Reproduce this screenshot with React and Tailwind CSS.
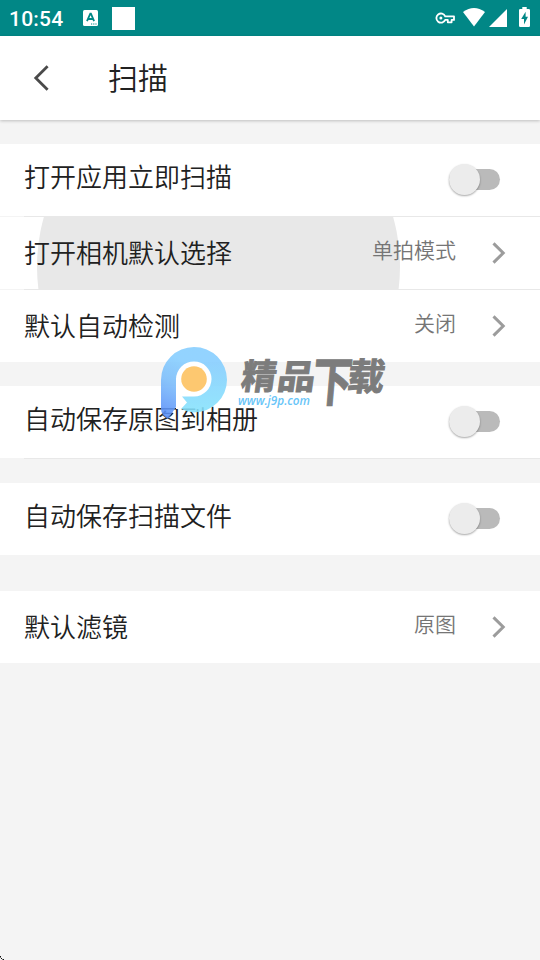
import React, { useState } from 'react';

const SECTIONS = [
  {
    id: 'open',
    className: 'mt-6',
    rows: [
      { id: 'scanOnOpen', label: '打开应用立即扫描', type: 'switch', divider: true },
      { id: 'cameraMode', label: '打开相机默认选择', type: 'link', value: '单拍模式', divider: true, pressed: true },
      { id: 'autoDetect', label: '默认自动检测', type: 'link', value: '关闭' },
    ],
  },
  {
    id: 'album',
    className: 'mt-6',
    rows: [{ id: 'saveOriginal', label: '自动保存原图到相册', type: 'switch', divider: true }],
  },
  {
    id: 'files',
    className: 'mt-6',
    rows: [{ id: 'saveScan', label: '自动保存扫描文件', type: 'switch' }],
  },
  {
    id: 'filter',
    className: 'mt-9',
    rows: [{ id: 'filter', label: '默认滤镜', type: 'link', value: '原图' }],
  },
];

const StatusBar = () => (
  <div className="flex h-9 items-center bg-[#018786] pl-[9px] pr-[10px] text-white">
    <span className="w-[74px] pt-px font-[Roboto] text-[21px] font-medium leading-9 tracking-[0.2px]">10:54</span>
    <svg className="h-4 w-[15px]" viewBox="0 0 15 16">
      <rect width="15" height="16" rx="1.5" fill="#fff" />
      <path d="M4 11.2 7.3 3.6h.6l3.2 7.6M5.2 9h4.6" fill="none" stroke="#018786" strokeWidth="1.8" />
      <path d="M8 14h1.2M10.2 14h1.2M12.4 14h1.2" stroke="#018786" strokeWidth="1.2" />
    </svg>
    <div className="ml-[14px] h-[23px] w-[23px] bg-white" />
    <svg className="ml-auto h-3 w-5" viewBox="0 0 20 12" fill="none" stroke="#fff" strokeWidth="1.8">
      <path d="M10.2 4.3A4.6 4.6 0 1 0 10.2 7.9H12.8V10.3H16.6V7.9H19V4.3Z" strokeLinejoin="round" />
      <circle cx="5.9" cy="6.1" r="1.5" fill="#fff" stroke="none" />
    </svg>
    <svg className="ml-[8px] h-[19px] w-[22px] -mt-px" viewBox="0 0 22 19">
      <path d="M0 4Q11-4 22 4L11 18.5Z" fill="#fff" />
    </svg>
    <svg className="ml-[4px] h-[18px] w-[18px]" viewBox="0 0 18 18">
      <path d="M18 0V18H0Z" fill="#fff" />
    </svg>
    <svg className="ml-[12px] h-5 w-[11px] -mt-0.5" viewBox="0 0 11 20">
      <path d="M3.3 0h4.4v2H9.7Q11 2 11 3.3V18.7Q11 20 9.7 20H1.3Q0 20 0 18.7V3.3Q0 2 1.3 2H3.3Z" fill="#fff" />
      <path d="M6.6 4.8 2.2 12H5V17.6L9 9.8H6.6Z" fill="#018786" />
    </svg>
  </div>
);

const Header = () => (
  <header className="flex h-[84px] items-center bg-white pl-[33px] shadow-[0_1px_3px_rgba(0,0,0,0.22)]">
    <button className="h-[26px] w-4">
      <svg className="h-[26px] w-4" viewBox="0 0 16 26" fill="none" stroke="#4a4a4a" strokeWidth="2.8">
        <path d="M14.6 1.3 2.8 13 14.6 24.7" />
      </svg>
    </button>
    <h1 className="ml-[59px] pb-[3px] text-[30px] font-[350] leading-[81px] text-[#212121]">扫描</h1>
  </header>
);

const Switch = ({ checked, onChange }) => (
  <button
    role="switch"
    aria-checked={checked}
    onClick={onChange}
    className="mb-0.5 mr-10 flex h-[31px] w-[51px] items-center"
  >
    <span className={`flex h-[21px] w-full items-center rounded-full bg-[#bababa] ${checked ? 'justify-end' : ''}`}>
      <span className="h-[31px] w-[31px] rounded-full bg-[#ececec] shadow-[0_1px_2px_rgba(0,0,0,0.35)]" />
    </span>
  </button>
);

const Chevron = () => (
  <svg className="ml-9 mr-[34px] h-[22px] w-[14px]" viewBox="0 0 14 22" fill="none" stroke="#9c9c9c" strokeWidth="3">
    <path d="M1.5 1.4 11.2 11 1.5 20.6" />
  </svg>
);

const Row = ({ row, checked, onToggle }) => (
  <>
    <div className="relative flex h-[72px] items-center overflow-hidden bg-white pl-6">
      {/* Touch ripple */}
      {row.pressed && (
        <div className="absolute left-[37px] top-[-132px] h-[363px] w-[363px] rounded-full bg-[#e8e8e8]" />
      )}
      <span
        className={`relative flex-1 text-[26px] font-[350] leading-[38px] text-[#212121] ${
          row.type === 'switch' ? 'pb-2' : 'pb-0.5'
        }`}
      >
        {row.label}
      </span>
      {row.type === 'switch' ? (
        <Switch checked={checked} onChange={onToggle} />
      ) : (
        <>
          <span className="relative pb-2 text-[21px] font-[350] leading-[30px] text-[#757575]">{row.value}</span>
          <Chevron />
        </>
      )}
    </div>
    {row.divider && <div className="ml-6 h-px bg-[#e8e8e8]" />}
  </>
);

const Watermark = () => (
  <svg
    className="pointer-events-none absolute left-[155px] top-[340px] h-[84px] w-[236px]"
    viewBox="155 340 236 84"
    fontFamily="'Noto Sans CJK SC', sans-serif"
  >
    <defs>
      <linearGradient id="logo" gradientUnits="userSpaceOnUse" x1="163" y1="412" x2="186" y2="362">
        <stop offset="0" stopColor="#5a90f8" />
        <stop offset="0.55" stopColor="#79bcfb" />
        <stop offset="1" stopColor="#84cdff" />
      </linearGradient>
      <linearGradient id="bowl" gradientUnits="userSpaceOnUse" x1="206" y1="408" x2="206" y2="362">
        <stop offset="0" stopColor="#84e0fc" />
        <stop offset="1" stopColor="#84cdff" />
      </linearGradient>
    </defs>
    <circle cx="194" cy="379" r="18" fill="#fff" />
    <path d="M176 379H194V396H182L187 403L181 409H176Z" fill="#fff" />
    <g fillOpacity="0.88">
      <path d="M161 380A33 33 0 0 1 194 347V361.5A18 18 0 0 0 176 379V407L168 419Q161 415 161 409Z" fill="url(#logo)" />
      <path
        d="M194 347A33 32.7 0 0 1 194 412.4Q187 412 181 409L187 402.5L182 396.5H194A17.5 17.5 0 0 0 194 361.5Z"
        fill="url(#bowl)"
      />
    </g>
    <circle cx="194" cy="379" r="12.8" fill="#fdc870" />
    <g fill="#7c7c7c" fontWeight="700" stroke="#7c7c7c" strokeWidth="1">
      <text transform="translate(240 389) skewX(-8)" fontSize="35">精</text>
      <text transform="translate(276 389) skewX(-8) scale(1.12 1)" fontSize="34">品</text>
      <text transform="translate(311 401) skewX(-5) scale(0.84 1.13)" fontSize="47">下</text>
      <text transform="translate(346 390) skewX(-8)" fontSize="37">载</text>
    </g>
    <text
      x="238"
      y="404.5"
      fontSize="12.5"
      fontWeight="600"
      fontStyle="italic"
      fontFamily="'Open Sans', sans-serif"
      textLength="72"
      lengthAdjust="spacingAndGlyphs"
      fill="#68c5f8"
    >
      www.j9p.com
    </text>
  </svg>
);

const App = () => {
  const [settings, setSettings] = useState({});

  const toggle = (id) => {
    setSettings((prev) => ({ ...prev, [id]: !prev[id] }));
  };

  return (
    <div className="relative h-[960px] w-[540px] overflow-hidden bg-[#f4f4f4] font-['Noto_Sans_CJK_SC',sans-serif]">
      <StatusBar />
      <Header />

      {SECTIONS.map((section) => (
        <section key={section.id} className={section.className}>
          {section.rows.map((row) => (
            <Row key={row.id} row={row} checked={!!settings[row.id]} onToggle={() => toggle(row.id)} />
          ))}
        </section>
      ))}

      <Watermark />

      {/* Rounded window corner */}
      <svg className="absolute bottom-0 left-0 h-1 w-1" viewBox="0 0 4 4">
        <path d="M0 0h1v1H0zM1 2h1v1H1zM3 3h1v1H3z" fill="#111" />
        <path d="M0 1h1v1H0zM2 3h1v1H2z" fill="#777" />
      </svg>
    </div>
  );
};

export default App;
